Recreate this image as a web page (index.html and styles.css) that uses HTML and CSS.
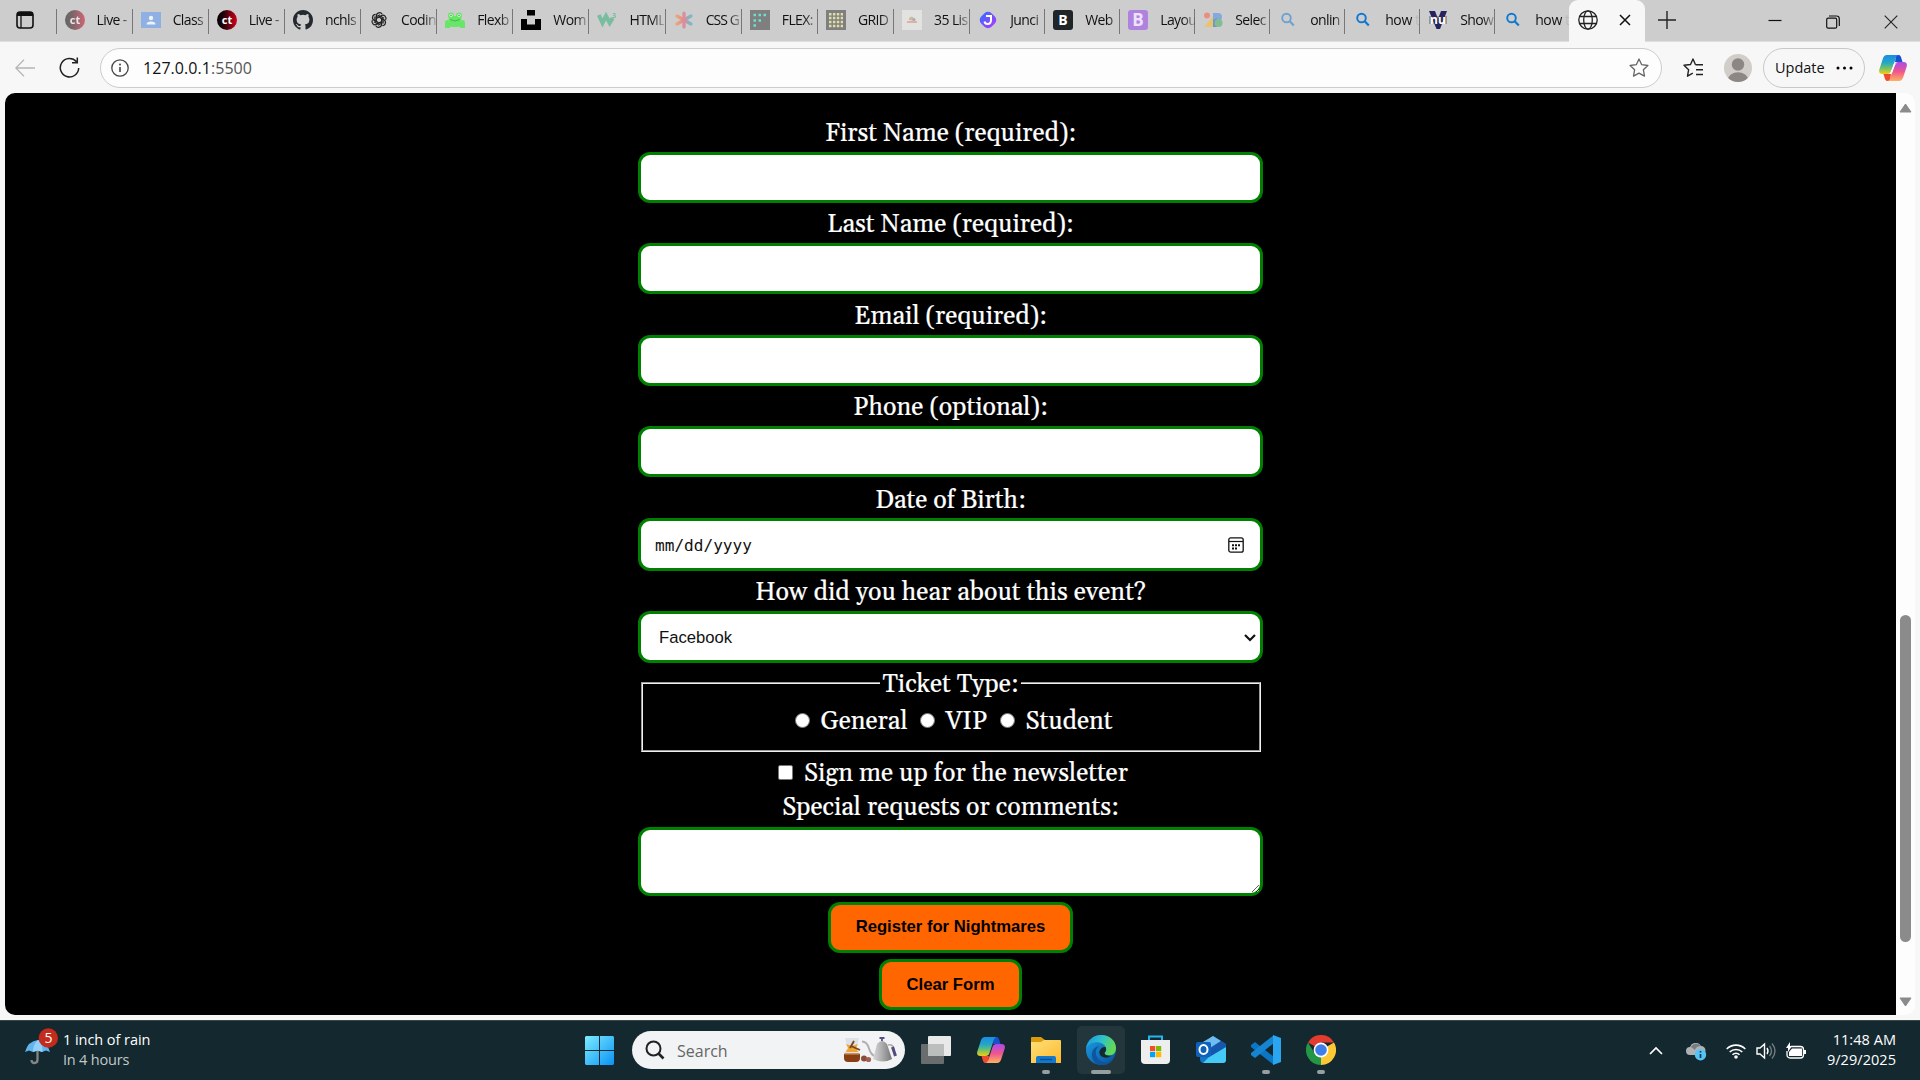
FILE: index.html
```html
<!DOCTYPE html>
<html lang="en">
<head>
<meta charset="utf-8">
<title>Registration</title>
<link rel="stylesheet" href="styles.css">
</head>
<body>
<svg width="0" height="0" class="defs">
  <defs>
    <linearGradient id="cpA" x1="0" y1="0" x2="0" y2="1"><stop offset="0" stop-color="#168de8"/><stop offset=".4" stop-color="#26a7c4"/><stop offset=".7" stop-color="#72c36a"/><stop offset="1" stop-color="#f5cb10"/></linearGradient>
    <linearGradient id="cpB" x1="0" y1="0" x2="0" y2="1"><stop offset="0" stop-color="#a64bed"/><stop offset=".5" stop-color="#ef558f"/><stop offset="1" stop-color="#ffb25e"/></linearGradient>
    <linearGradient id="win" x1="0" y1="0" x2="1" y2="1"><stop offset="0" stop-color="#7cecff"/><stop offset="1" stop-color="#0a92f4"/></linearGradient>
    <linearGradient id="edgeA" x1="0" y1="0" x2="1" y2=".3"><stop offset="0" stop-color="#1995e6"/><stop offset=".55" stop-color="#2fc1c8"/><stop offset="1" stop-color="#62d957"/></linearGradient>
    <linearGradient id="edgeB" x1="0" y1="0" x2="1" y2="1"><stop offset="0" stop-color="#1aa0e8"/><stop offset="1" stop-color="#0b4d99"/></linearGradient>
    <linearGradient id="fold" x1="0" y1="0" x2="1" y2="1"><stop offset="0" stop-color="#ffe07a"/><stop offset="1" stop-color="#fcb92c"/></linearGradient>
    <linearGradient id="ctR"><stop offset="0" stop-color="#000"/><stop offset=".35" stop-color="#26020a"/><stop offset="1" stop-color="#d4001c"/></linearGradient>
    <linearGradient id="steel"><stop offset="0" stop-color="#d8d8d8"/><stop offset=".5" stop-color="#aaa"/><stop offset="1" stop-color="#777"/></linearGradient>
    <linearGradient id="jn"><stop offset="0" stop-color="#4765ff"/><stop offset="1" stop-color="#9a43ff"/></linearGradient>
    <linearGradient id="star"><stop offset="0" stop-color="#efa477"/><stop offset=".5" stop-color="#dd8a94"/><stop offset="1" stop-color="#74bdc8"/></linearGradient>
    <symbol id="copilot" viewBox="0 0 28 26">
      <path d="M17 0h2.500C21.500 0 22 2 22.600 4l.9 3H16Z" fill="#1a4fd0"/>
      <path d="M11 26H8.500C6.500 26 6 24 5.400 22l-.9-3H12Z" fill="#ee4b2e"/>
      <path d="M8 0h12c-2 0-2.800 1.600-3.400 3.600L12.500 16c-.7 2.200-1.800 3-4 3H3.500C.7 19-.4 17 .3 14.500L3.800 3.700C4.500 1.400 5.800 0 8 0Z" fill="url(#cpA)"/>
      <path d="M20 26H8c2 0 2.800-1.600 3.400-3.600L15.500 10c.7-2.200 1.800-3 4-3h5c2.800 0 3.900 2 3.200 4.500l-3.500 10.800C23.500 24.600 22.200 26 20 26Z" fill="url(#cpB)"/>
    </symbol>
    <symbol id="copilot-light" viewBox="0 0 28 26">
      <use href="#copilot"/>
      <path d="M15 8.500h3.500c-2 0-2.600 1.500-3 3L13.500 17c-.5 1-1 1.500-2 1.500H9.500c1.500 0 2-1 2.500-2.500Z" fill="#fff"/>
    </symbol>
    <symbol id="lens" viewBox="0 0 20 20"><circle cx="8.500" cy="8" r="4.300" fill="none" stroke="currentColor" stroke-width="1.900"/><path d="m11.700 11.300 4.100 4.300" stroke="currentColor" stroke-width="2.200"/></symbol>
  </defs>
</svg>

<header class="tabbar">
  <div class="tab-actions"><svg width="18" height="18" viewBox="0 0 18 18"><rect x="1" y="1" width="16" height="16" rx="3" fill="none" stroke="#111" stroke-width="1.600"/><path d="M1 2.500Q1 1 3.500 1h11Q17 1 17 2.500V5H1Z" fill="#111"/><path d="M5 5v12" stroke="#111" stroke-width="1.300"/></svg></div>
  <nav class="tabs wide">
    <div class="tab"><svg class="fav dim" viewBox="0 0 20 20"><circle cx="10" cy="10" r="10" fill="url(#ctR)"/><text x="10" y="14" class="ct">ct</text></svg><span>Live -</span></div>
    <div class="tab"><svg class="fav" viewBox="0 0 20 20"><rect y="2" width="20" height="16" fill="#8fb0e2"/><circle cx="10" cy="8" r="2.200" fill="#eef3fb"/><path d="M5.500 14.500q0-3 4.500-3t4.500 3Z" fill="#eef3fb"/></svg><span>Class</span></div>
    <div class="tab"><svg class="fav" viewBox="0 0 20 20"><circle cx="10" cy="10" r="10" fill="url(#ctR)"/><text x="10" y="14" class="ct">ct</text></svg><span>Live -</span></div>
    <div class="tab"><svg class="fav" viewBox="0 0 16 16"><path fill="#24292f" d="M8 0C3.580 0 0 3.580 0 8c0 3.540 2.290 6.530 5.470 7.590.4.070.55-.17.55-.38 0-.19-.01-.82-.01-1.490-2.010.37-2.530-.49-2.690-.94-.09-.23-.48-.94-.82-1.130-.28-.15-.68-.52-.01-.53.63-.01 1.080.58 1.230.82.72 1.210 1.870.87 2.330.66.070-.52.28-.87.51-1.070-1.780-.2-3.640-.89-3.640-3.950 0-.87.31-1.590.82-2.150-.08-.2-.36-1.020.08-2.120 0 0 .67-.21 2.200.82a7.600 7.600 0 0 1 4 0c1.530-1.040 2.200-.82 2.200-.82.44 1.100.16 1.920.08 2.120.51.56.82 1.270.82 2.150 0 3.070-1.870 3.750-3.650 3.950.29.25.54.73.54 1.480 0 1.070-.01 1.930-.01 2.200 0 .21.15.46.55.38A8 8 0 0 0 16 8c0-4.420-3.580-8-8-8Z"/></svg><span>nchls</span></div>
    <div class="tab"><svg class="fav" viewBox="-1.500 -1.500 23 23"><g fill="none" stroke="#222" stroke-width="1.400"><path id="k" d="M7 10V5.200a3.600 3.600 0 0 1 6.700-1.800M7 8.200l4.600-2.700 4.200 2.400"/><use href="#k" transform="rotate(60 10 10)"/><use href="#k" transform="rotate(120 10 10)"/><use href="#k" transform="rotate(180 10 10)"/><use href="#k" transform="rotate(240 10 10)"/><use href="#k" transform="rotate(300 10 10)"/></g></svg><span>Codin</span></div>
    <div class="tab"><svg class="fav" viewBox="0 0 20 20"><g fill="#67e667"><circle cx="6" cy="5.500" r="3"/><circle cx="14" cy="5.500" r="3"/><rect x="3.500" y="6" width="13" height="11" rx="4"/><path d="M0 18v-5q0-3 3-3l2 5v3ZM20 18v-5q0-3-3-3l-2 5v3Z"/></g><circle cx="6" cy="5.200" r="1.500" fill="#e9ffe9"/><circle cx="14" cy="5.200" r="1.500" fill="#e9ffe9"/><circle cx="6" cy="5.200" r=".7" fill="#264"/><circle cx="14" cy="5.200" r=".7" fill="#264"/><path d="M5 9.500q5 3 10 0" stroke="#44b94c" fill="none"/></svg><span>Flexb</span></div>
    <div class="tab"><svg class="fav" viewBox="0 0 20 20"><path d="M6 0h8v5.500H6ZM0 9h6v5.500h8V9h6v11H0Z"/></svg><span>Wom</span></div>
    <div class="tab"><svg class="fav" viewBox="0 0 20 20"><path d="m1.800 5 3.700 8 3.500-7 3.700 7 3-5" fill="none" stroke="#78bda0" stroke-width="4"/><text x="15" y="8" class="three">3</text></svg><span>HTML</span></div>
    <div class="tab"><svg class="fav" viewBox="0 0 20 20"><g stroke="url(#star)" stroke-width="3.200" stroke-linecap="round"><path d="M3 6l14 8M17 6 3 14"/></g><path d="M10 3v14" stroke="#d98d9d" stroke-width="3.200" stroke-linecap="round"/></svg><span class="css">CSS G</span></div>
    <div class="tab"><svg class="fav" viewBox="0 0 20 20"><path d="M0 0h20v20H0Z" fill="#7f7f7f"/><g stroke="#6de0cf" stroke-width="2.500" stroke-dasharray="2.500 2.500"><path d="M3.500 5h13M3.500 10.500h8M3.500 15.500h3"/></g></svg><span>FLEX:</span></div>
    <div class="tab"><svg class="fav" viewBox="0 0 20 20"><path d="M0 0h20v20H0Z" fill="#7f7f7f"/><g stroke="#e2dda4" stroke-width="2.500" stroke-dasharray="2.500 1.400"><path d="M3 4.200h14M3 8.100h14M3 12h14M3 15.900h14"/></g></svg><span>GRID</span></div>
    <div class="tab"><svg class="fav" viewBox="0 0 20 20"><path d="M0 0h20v20H0Z" fill="#e2e2e0"/><path d="M7 10q0-4 4-3l2 4Z" fill="#c8bca0"/><path d="M5 12h10" stroke="#dfaaa2" stroke-width="1.800"/><circle cx="12" cy="9.500" r="1.500" fill="#a2adb8"/></svg><span>35 Lis</span></div>
  </nav>
  <nav class="tabs narrow">
    <div class="tab"><svg class="fav" viewBox="0 0 20 20"><rect x="2.700" y="2.700" width="14.600" height="14.600" rx="5" transform="rotate(45 10 10)" fill="url(#jn)"/><path d="M8 6h5v4q0 4-3.500 4Q7 14 6.500 11.500" fill="none" stroke="#fff" stroke-width="2"/></svg><span>Junci</span></div>
    <div class="tab"><svg class="fav" viewBox="0 0 20 20"><rect width="20" height="20" rx="3" fill="#20252a"/><text x="10" y="15" class="bee">B</text></svg><span>Web</span></div>
    <div class="tab"><svg class="fav" viewBox="0 0 20 20"><rect width="20" height="20" rx="3" fill="#af82df"/><text x="10" y="16" class="bee big">B</text></svg><span>Layou</span></div>
    <div class="tab"><svg class="fav" viewBox="0 0 20 20"><circle cx="4" cy="5.500" r="3" fill="#e98e84"/><path d="M1 17 10 6v11Z" fill="#eac36f"/><path d="M10 3h5a4 4 0 0 1 0 8h-5Z" fill="#86a9dc"/><path d="M10 10v7h4V8Z" fill="#6d95d2"/><circle cx="15.500" cy="13" r="4" fill="#82bd91"/></svg><span>Selec</span></div>
    <div class="tab"><svg class="fav blue dim"><use href="#lens"/></svg><span>onlin</span></div>
    <div class="tab"><svg class="fav blue"><use href="#lens"/></svg><span class="fade">how t</span></div>
    <div class="tab"><svg class="fav" viewBox="0 0 20 20"><path d="M1 1h6l3 8 3-8h6l-7 18H8.500Z" fill="#282261"/><path d="M1 6h18v8H1Z" fill="#333" opacity=".35"/><text x="10" y="14" class="nu">nu</text></svg><span>Show</span></div>
    <div class="tab"><svg class="fav blue"><use href="#lens"/></svg><span class="fade">how t</span></div>
  </nav>
  <div class="active-tab">
    <svg width="20" height="20" viewBox="0 0 20 20" fill="none" stroke="#222" stroke-width="1.300"><circle cx="10" cy="10" r="9.200"/><ellipse cx="10" cy="10" rx="4.300" ry="9.200"/><path d="M1.500 6.500h17M1.500 13.500h17"/></svg>
    <svg width="12" height="12" viewBox="0 0 12 12"><path d="m1 1 10 10M11 1 1 11" stroke="#111" stroke-width="1.500"/></svg>
  </div>
  <svg class="plus" width="18" height="18" viewBox="0 0 18 18"><path d="M9 0v18M0 9h18" stroke="#222" stroke-width="1.400"/></svg>
  <div class="window-controls">
    <svg width="14" height="14" viewBox="0 0 14 14"><path d="M.5 5.500h13" stroke="#111" stroke-width="1.200"/></svg>
    <svg width="14" height="14" viewBox="0 0 14 14" fill="none" stroke="#111" stroke-width="1.200"><rect x=".7" y="3.200" width="10" height="10" rx="1.500"/><path d="M3 1h7.500A2.800 2.800 0 0 1 13.300 3.800V11"/></svg>
    <svg width="14" height="14" viewBox="0 0 14 14"><path d="m.7.7 12.600 12.600M13.300.7.7 13.300" stroke="#222" stroke-width="1.100"/></svg>
  </div>
</header>

<div class="toolbar">
  <svg class="back" width="20" height="18" viewBox="0 0 20 18" fill="none" stroke="#b5b5b5" stroke-width="1.300"><path d="M20 9H1M9 .8.800 9 9 17.200"/></svg>
  <svg class="reload" width="21" height="21" viewBox="0 0 21 21" fill="none" stroke="#222" stroke-width="1.500"><path d="M17.500 4.800A9.200 9.200 0 1 0 19.700 11M18.300.5v5.300H13"/></svg>
  <div class="address">
    <svg width="18" height="18" viewBox="0 0 18 18"><circle cx="9" cy="9" r="8.200" fill="none" stroke="#444" stroke-width="1.300"/><path d="M9 8v5" stroke="#444" stroke-width="1.600"/><circle cx="9" cy="5.500" r="1" fill="#444"/></svg>
    <span class="url">127.0.0.1<span class="port">:5500</span></span>
    <svg class="fav-star" width="20" height="20" viewBox="0 0 20 20"><path d="m10 1 2.700 5.700 6.200.8-4.500 4.300 1.100 6.300-5.500-3-5.500 3 1.100-6.300L1.100 7.500l6.200-.8Z" fill="none" stroke="#666" stroke-width="1.300" stroke-linejoin="round"/></svg>
  </div>
  <svg class="collections" width="21" height="20" viewBox="0 0 21 20" fill="none" stroke="#222" stroke-width="1.400"><path d="M12.500 6.700 10 1 7.500 6.500l-6.500.8 4.600 4.500-1.100 6.400 5.300-3M12.500 6.700h7.500M13 11.700h7M13 16.500h7" stroke-linejoin="round"/></svg>
  <svg class="avatar" width="28" height="28" viewBox="0 0 28 28"><clipPath id="av"><circle cx="14" cy="14" r="14"/></clipPath><g clip-path="url(#av)"><path d="M0 0h28v28H0Z" fill="#d1cec9"/><circle cx="14" cy="10.500" r="6.200" fill="#8c8784"/><ellipse cx="14" cy="25.500" rx="10" ry="7.200" fill="#8c8784"/></g></svg>
  <div class="update"><span>Update</span><svg width="17" height="4" viewBox="0 0 17 4"><circle cx="2" cy="2" r="1.500"/><circle cx="8.500" cy="2" r="1.500"/><circle cx="15" cy="2" r="1.500"/></svg></div>
  <svg class="copilot" width="28" height="26"><use href="#copilot-light"/></svg>
</div>

<div class="viewport">
  <main class="page">
    <form class="form">
      <div class="field"><label for="fn">First Name (required):</label><input id="fn" class="box"></div>
      <div class="field"><label for="ln">Last Name (required):</label><input id="ln" class="box"></div>
      <div class="field"><label for="em">Email (required):</label><input id="em" class="box"></div>
      <div class="field"><label for="ph">Phone (optional):</label><input id="ph" class="box"></div>
      <div class="field date"><label>Date of Birth:</label>
        <div class="box"><span class="mono">mm/dd/yyyy</span><svg width="16" height="16" viewBox="0 0 16 16"><rect x=".8" y=".8" width="14.400" height="14.400" rx="2" fill="none" stroke="#111" stroke-width="1.300"/><path d="M1 4.500h14" stroke="#111" stroke-width="1.200"/><path d="M4 8.300h8M4 11.500h5" stroke="#111" stroke-width="2" stroke-dasharray="2 1"/></svg></div></div>
      <div class="field select"><label>How did you hear about this event?</label>
        <div class="box"><span>Facebook</span><svg width="12" height="8" viewBox="0 0 12 8"><path d="m1 1 5 5 5-5" fill="none" stroke="#111" stroke-width="2.200"/></svg></div></div>
      <fieldset class="tickets">
        <legend>Ticket Type:</legend>
        <div class="options">
          <i class="radio"></i><span class="general">General</span>
          <i class="radio"></i><span class="vip">VIP</span>
          <i class="radio"></i><span class="student">Student</span>
        </div>
      </fieldset>
      <div class="newsletter"><i class="check"></i><span>Sign me up for the newsletter</span></div>
      <label class="comments" for="cm">Special requests or comments:</label>
      <textarea id="cm" class="box area"></textarea>
      <button type="button" class="btn register">Register for Nightmares</button>
      <button type="button" class="btn clear">Clear Form</button>
    </form>
  </main>
  <div class="scrollbar">
    <svg width="13" height="10" viewBox="0 0 13 10"><path d="M6.500 1 12 9H1Z" fill="#8b8b8b" stroke="#8b8b8b" stroke-linejoin="round"/></svg>
    <div class="thumb"></div>
    <svg width="13" height="10" viewBox="0 0 13 10"><path d="M6.500 9 12 1H1Z" fill="#8b8b8b" stroke="#8b8b8b" stroke-linejoin="round"/></svg>
  </div>
</div>

<footer class="taskbar">
  <div class="weather">
    <svg width="34" height="38" viewBox="0 0 34 38"><path d="M12.500 20v11.500q0 3.500-3 3.500t-3-3" fill="none" stroke="#858585" stroke-width="2.300"/><path d="M0 24Q3 13 13 12q9 1 12 12l-4-1.500-4 1.500-4.500-1.500L8 24l-4-1.500Z" fill="#60b5ed"/><path d="M8 24q0-8 5-12 5 4 4.500 12l-5-1.500Z" fill="#93d1fa"/><circle cx="23.300" cy="10" r="9.700" fill="#c42b1c"/><text x="23.300" y="15" class="badge">5</text></svg>
    <div class="weather-text"><span class="rain">1 inch of rain</span><span class="sub">In 4 hours</span></div>
  </div>
  <div class="apps">
    <div class="app start"><svg width="29" height="29" viewBox="0 0 29 29"><path fill="url(#win)" d="M1 0h13v14H0V1ZM15 0h13l1 1v13H15ZM0 15h14v14H1l-1-1ZM15 15h14v13l-1 1H15Z"/></svg></div>
    <div class="search">
      <svg class="mag" width="20" height="20" viewBox="0 0 20 20"><circle cx="8.500" cy="8.500" r="7" fill="none" stroke="#222" stroke-width="2"/><path d="m13.500 13.500 5 5" stroke="#222" stroke-width="2.600"/></svg>
      <span>Search</span>
      <svg width="54" height="26" viewBox="0 0 54 26"><path d="M2 1h14q-1 7-4.500 9.500Q17 13 17 19q0 5-3 5H4q-3 0-3-5 0-6 5.500-8.500Q3 8 2 1Z" fill="#dce2e5"/><path d="M1 17h16v4q0 4-4 4H5q-4 0-4-4Z" fill="#8a3e14"/><path d="M1.500 17h15" stroke="#c27a3c" stroke-width="1.500"/><path d="m3 7 6 2 6-2-2 4 2 4H3l2-4Z" fill="#eda634"/><path d="m7 11 4-7M8 9l9 4" stroke="#7b4220" stroke-width="1.800"/><circle cx="21" cy="21.500" r="3" fill="#8d4b3d"/><circle cx="25.500" cy="22.500" r="2.600" fill="#a2604f"/><path d="M19 4.500q5 0 7 7t7 8" fill="none" stroke="#b0b0b0" stroke-width="2"/><path d="M34 7q5-6 10 0l5 15q-9 5-19 0Z" fill="url(#steel)"/><path d="M39 4V1M36.500 1h5" stroke="#5b4e86" stroke-width="1.800"/><path d="M45 8q5-1 6 4" fill="none" stroke="#aaa" stroke-width="1.500"/><path d="m49.500 10 3 9" stroke="#554a7e" stroke-width="3"/></svg>
    </div>
    <div class="app view"><svg width="30" height="28" viewBox="0 0 30 28"><rect y="8" width="23" height="20" rx="1" fill="#6a6d6d"/><rect x="7" width="23" height="20" rx="1" fill="#e9e9e9"/><path d="M7 8h16v12H7Z" fill="#bcbdbd"/></svg></div>
    <div class="app"><svg width="28" height="26"><use href="#copilot"/></svg></div>
    <div class="app running"><svg width="30" height="28" viewBox="0 0 30 28"><path d="M0 2q0-1 1-1h9l4 3v5H0Z" fill="#dd9a0a"/><path d="M0 6h10l3-2h16q1 0 1 1v22H0Z" fill="url(#fold)"/><path d="M5 27v-5q0-2 2-2h16q2 0 2 2v5Z" fill="#1478cc"/><path d="M9 23.500h12" stroke="#064d92" stroke-width="1.400"/></svg></div>
    <div class="app running current"><svg width="30" height="30" viewBox="0 0 30 30"><circle cx="15" cy="15" r="15" fill="url(#edgeB)"/><path d="M0 14C1 5 8 0 15 0c9 0 15 6 15 13 0 5-3 7.500-7 7.500-3 0-5-1-4.500-2.500 2-2 2-4 1-6C17 6 4 5 0 14Z" fill="url(#edgeA)"/><path d="M13 11c-5 4-4 12 2 15 5 2.500 10 1 13-3-3 6-9 8-15 7C4 27 3 13 13 11Z" fill="#0d559f"/><path d="M19.500 12c1.500 3 0 4.500-1 6 0 2 3 3 7 2.500-5 4-11 2-12-2-.7-3 2-7 6-6.500Z" fill="#15282e"/></svg></div>
    <div class="app"><svg width="29" height="30" viewBox="0 0 29 30"><path d="M8 7V1.500h13V7" fill="none" stroke="#25b5ed" stroke-width="2"/><path d="M0 5h29v20q0 4-4 4H4q-4 0-4-4Z" fill="#eee"/><path d="M9 11h5.200v5.200H9Z" fill="#f25022"/><path d="M15 11h5.200v5.200H15Z" fill="#7fba00"/><path d="M9 17h5.200v5.200H9Z" fill="#00a4ef"/><path d="M15 17h5.200v5.200H15Z" fill="#ffb900"/></svg></div>
    <div class="app"><svg width="30" height="28" viewBox="0 0 30 28"><path d="m4 9 13-9 13 8v15q0 4-4 4H8q-4 0-4-4Z" fill="#1274c7"/><path d="m7 6 10-6 8 5-18 11Z" fill="#70bbef"/><path d="M15 19 30 10v14q0 3-3 3H7Z" fill="#44caf5"/><path d="m15 12 10-7 5 3v3l-15 9Z" fill="#1557ac"/><rect y="6" width="15" height="15" rx="2" fill="#0f62bb"/><ellipse cx="7.500" cy="13.500" rx="4" ry="4.500" fill="none" stroke="#fff" stroke-width="2"/></svg></div>
    <div class="app running"><svg width="30" height="30" viewBox="0 0 30 30"><path d="m0 10 4-3 19 15v8L0 12Z" fill="#0b76c4"/><path d="m0 20 4 3L23 8V0L0 18Z" fill="#1685d1"/><path d="m22 0 8 3v24l-8 3Z" fill="#2aa5ef"/></svg></div>
    <div class="app running"><svg width="30" height="30" viewBox="0 0 30 30"><path d="M15 15 2 7.500A15 15 0 0 1 28 7.500H15Z" fill="#e33b2e"/><path d="M15 15 28 7.500A15 15 0 0 1 15 30Z" fill="#fcc934"/><path d="m2 7.500 7 11.500 6.500 3.500L15 30A15 15 0 0 1 2 7.500Z" fill="#249746"/><path d="M15 30 21.500 18.700 15 15Z" fill="#fcc934"/><circle cx="15" cy="15" r="7.400" fill="#fff"/><circle cx="15" cy="15" r="5.800" fill="#3f7de8"/></svg></div>
  </div>
  <div class="tray">
    <svg class="chev" width="14" height="9" viewBox="0 0 14 9"><path d="m1 8 6-6 6 6" fill="none" stroke="#fff" stroke-width="1.700"/></svg>
    <svg class="cloud" width="21" height="18" viewBox="0 0 21 18"><path d="M4 12a4 4 0 0 1 0-8 6 6 0 0 1 11-1 4.500 4.500 0 0 1 0 9Z" fill="#aeb2b4"/><path d="M5 4a6 6 0 0 1 10-1q-5 0-6 4Z" fill="#777e81"/><circle cx="14.500" cy="11.800" r="5.700" fill="#55c3f6"/><path d="M14.500 11v4M14.500 8v1.600" stroke="#163744" stroke-width="1.700"/></svg>
    <svg class="wifi" width="20" height="16" viewBox="0 0 20 16" fill="none" stroke="#fff" stroke-width="1.600"><path d="M.7 6a13 13 0 0 1 18.600 0M3.700 9a9 9 0 0 1 12.600 0M6.500 11.800a5 5 0 0 1 7 0"/><circle cx="10" cy="14" r="1" fill="#fff"/></svg>
    <svg class="vol" width="20" height="18" viewBox="0 0 20 18" fill="none" stroke="#fff" stroke-width="1.400"><path d="M1 6h3l4.500-4v14L4 12H1ZM11 6q2 3 0 6"/><path d="M13.500 4q4 5 0 10M16 1.500q6 7.500 0 15" stroke="#6f7b80"/></svg>
    <svg class="bat" width="20" height="17" viewBox="0 0 20 17"><path d="M5 4.500h9.500a3 3 0 0 1 3 3v5.500a3 3 0 0 1-3 3H4a3 3 0 0 1-3-3V9" fill="none" stroke="#fff" stroke-width="1.300"/><path d="M6 6.500h10v7.500H3v-4Z" fill="#fff"/><path d="M18 8h2v4h-2Z" fill="#fff"/><path d="M4 0 0 6h2v4l4-6H4Z" fill="#fff"/></svg>
    <div class="clock"><span>11:48 AM</span><span>9/29/2025</span></div>
  </div>
</footer>
</body>
</html>
```
FILE: styles.css
```css
* { box-sizing: border-box; }
body { margin: 0; width: 1920px; height: 1080px; overflow: hidden; display: flex; flex-direction: column; background: #f7f7f7; font-family: "Open Sans", "Noto Sans", sans-serif; color: #111; }
svg { display: block; flex: none; }
.defs { position: absolute; }

.tabbar { height: 42px; display: flex; background: #cdcdcd; border-bottom: 1px solid #dedede; flex: none; }
.tab-actions { width: 55.500px; padding: 11px 0 0 16px; }
.tabs { display: flex; }
.tab { width: 76.150px; height: 25px; margin-top: 9px; padding-left: 8px; border-left: 1px solid #777; display: flex; align-items: center; }
.narrow .tab { width: 75px; }
.tab span { margin-left: 12px; width: 35px; flex: none; overflow: hidden; font-size: 14px; letter-spacing: -.6px; line-height: 22px; margin-top: -3px; white-space: nowrap; -webkit-mask-image: linear-gradient(90deg, #000 65%, rgba(0,0,0,.2)); mask-image: linear-gradient(90deg, #000 65%, rgba(0,0,0,.2)); }
.tab .fade { width: 34px; letter-spacing: -.4px; -webkit-mask-image: linear-gradient(90deg, #000 78%, rgba(0,0,0,.1) 88%); mask-image: linear-gradient(90deg, #000 78%, rgba(0,0,0,.1) 88%); }
.tab .css { letter-spacing: -.9px; }
.fav { width: 20px; height: 20px; margin-top: -3px; }
.dim { opacity: .5; }
.blue { color: #0f78d0; }
.ct { font: bold 11px "Open Sans", sans-serif; fill: #fff; text-anchor: middle; }
.three { font: bold 7px "Open Sans", sans-serif; fill: #78bda0; }
.bee { font: bold 14px "Open Sans", sans-serif; fill: #fff; text-anchor: middle; }
.big { font-size: 17px; fill: #eee2fa; }
.nu { font: bold 12px "Open Sans", sans-serif; fill: #fff; text-anchor: middle; }
.active-tab { width: 76px; height: 42px; background: #f7f7f7; border-radius: 9px 9px 0 0; padding: 0 14px 2px 9px; display: flex; align-items: center; justify-content: space-between; }
.plus { margin: 11px 0 0 12.500px; }
.window-controls { margin-left: auto; padding: 15px 22px 0 0; display: flex; gap: 44px; }

.toolbar { height: 51px; flex: none; display: flex; align-items: center; background: #f7f7f7; }
.back { margin-left: 15px; }
.reload { margin-left: 24px; }
.address { margin-left: 20px; width: 1562px; height: 40px; border: 1px solid #ccc; border-radius: 20px; background: #fdfdfd; display: flex; align-items: center; padding: 0 12px 0 10px; }
.url { margin-left: 14px; font-size: 16px; line-height: 24px; letter-spacing: .05px; }
.port { color: #555; }
.fav-star { margin-left: auto; }
.collections { margin-left: 21px; }
.avatar { margin-left: 20px; }
.update { margin-left: 11px; width: 102px; height: 40px; border: 1px solid #c8c8c8; border-radius: 20px; display: flex; align-items: center; justify-content: space-between; padding: 0 11px 0 11px; font-size: 14.500px; }
.copilot { margin-left: 14px; }

.viewport { height: 922px; margin: 0 5px; display: flex; flex: none; border-radius: 10px; overflow: hidden; background: #fdfdfd; }
.page { width: 1891px; background: #000; padding-top: 25px; display: flex; justify-content: center; }
.scrollbar { width: 19px; display: flex; flex-direction: column; align-items: center; padding: 10px 0 8px; }
.thumb { width: 11px; height: 327px; margin: auto 0 55px; border-radius: 6px; background: #8b8b8b; }

.form { width: 625px; display: flex; flex-direction: column; align-items: center; color: #fff; font-family: Georgia, Gelasio, "Liberation Serif", serif; font-size: 25px; line-height: 33px; white-space: nowrap; -webkit-text-stroke: .2px #fff; }
.field { width: 625px; height: 91.400px; display: flex; flex-direction: column; align-items: center; }
.field label { height: 34px; flex: none; }
.box { width: 625px; height: 51px; flex: none; margin: 0; background: #fff; color: #111; border: 3px solid green; border-radius: 12px; font: 16.670px/20px "Liberation Sans", sans-serif; -webkit-text-stroke: 0; display: flex; align-items: center; justify-content: space-between; }
.date { height: 93.500px; }
.date label { height: 34.700px; padding-top: 1px; }
.date .box { height: 52.700px; padding: 1px 16px 0 14px; }
.mono { font: 16.100px "DejaVu Sans Mono", monospace; }
.select .box { height: 52px; padding: 2px 4px 0 18px; }
.tickets { width: 620px; height: 84px; margin: -.8px 0 0; padding: 0; border: 2px groove #f0f0f0; }
.tickets legend { margin: 0 auto; padding: 0 2px; height: 30px; line-height: 35px; }
.options { display: flex; align-items: center; height: 30px; margin: 8px 0 0 152px; }
.radio { width: 15px; height: 15px; border: 1px solid #777; border-radius: 50%; background: #fff; }
.options span { margin: 3px 0 0 11px; }
.general { width: 99px; }
.vip { width: 54px; }
.newsletter { margin: 4px 0 0 5px; height: 34.500px; display: flex; align-items: center; gap: 11px; }
.newsletter span { margin-top: 3px; }
.comments { height: 36.500px; padding-top: 1.500px; }
.check { width: 15px; height: 15px; border: 1px solid #777; border-radius: 2px; background: #fff; }
.area { height: 69px; resize: vertical; }
.btn { height: 51px; margin: 6px 0 0; padding: 0 0 1px; border: 3px solid green; border-radius: 12px; background: #f60; color: #000; font: bold 16.670px "Liberation Sans", sans-serif; -webkit-text-stroke: 0; flex: none; }
.register { width: 245px; }
.clear { width: 143px; padding: 1px 0 0; }

.taskbar { margin-top: 5px; height: 60px; flex: none; background: #14282f; border-top: 1px solid #35474c; color: #fff; display: flex; font-size: 14.500px; letter-spacing: -.2px; }
.weather { width: 584px; padding: 7px 0 0 25px; display: flex; gap: 4px; }
.weather-text { display: flex; flex-direction: column; line-height: 20px; padding-top: 2px; }
.weather-text .rain { letter-spacing: -.05px; }
.weather-text .sub { color: #c0c8ca; }
.badge { font: 14px "Open Sans", sans-serif; fill: #fff; text-anchor: middle; }
.apps { display: flex; align-items: flex-start; padding-top: 5px; }
.app { width: 48px; height: 48px; margin-right: 7px; display: flex; align-items: center; justify-content: center; border-radius: 5px; position: relative; }
.app.start { width: 30px; margin-right: 18px; }
.app.view { margin-left: 6.500px; }
.running::after { content: ""; position: absolute; bottom: 0; left: 20px; width: 8px; height: 4px; border-radius: 2px; background: #969ea1; }
.current { background: #23363c; }
.current::after { left: 14px; width: 20px; }
.search { width: 273px; height: 38px; margin-top: 5px; border-radius: 19px; background: #f1f3f5; color: #666; display: flex; align-items: center; padding: 0 8px 0 13px; font-size: 16px; letter-spacing: 0; }
.search span { margin: 2px auto 0 12px; }
.tray { margin-left: auto; padding-right: 24px; display: flex; align-items: center; }
.cloud { margin: 3px 0 0 23px; }
.wifi { margin-left: 19px; }
.vol { margin-left: 10px; }
.bat { margin-left: 10px; }
.clock { display: flex; flex-direction: column; align-items: flex-end; line-height: 20px; margin: -1px 0 0 21px; letter-spacing: .05px; }
```
